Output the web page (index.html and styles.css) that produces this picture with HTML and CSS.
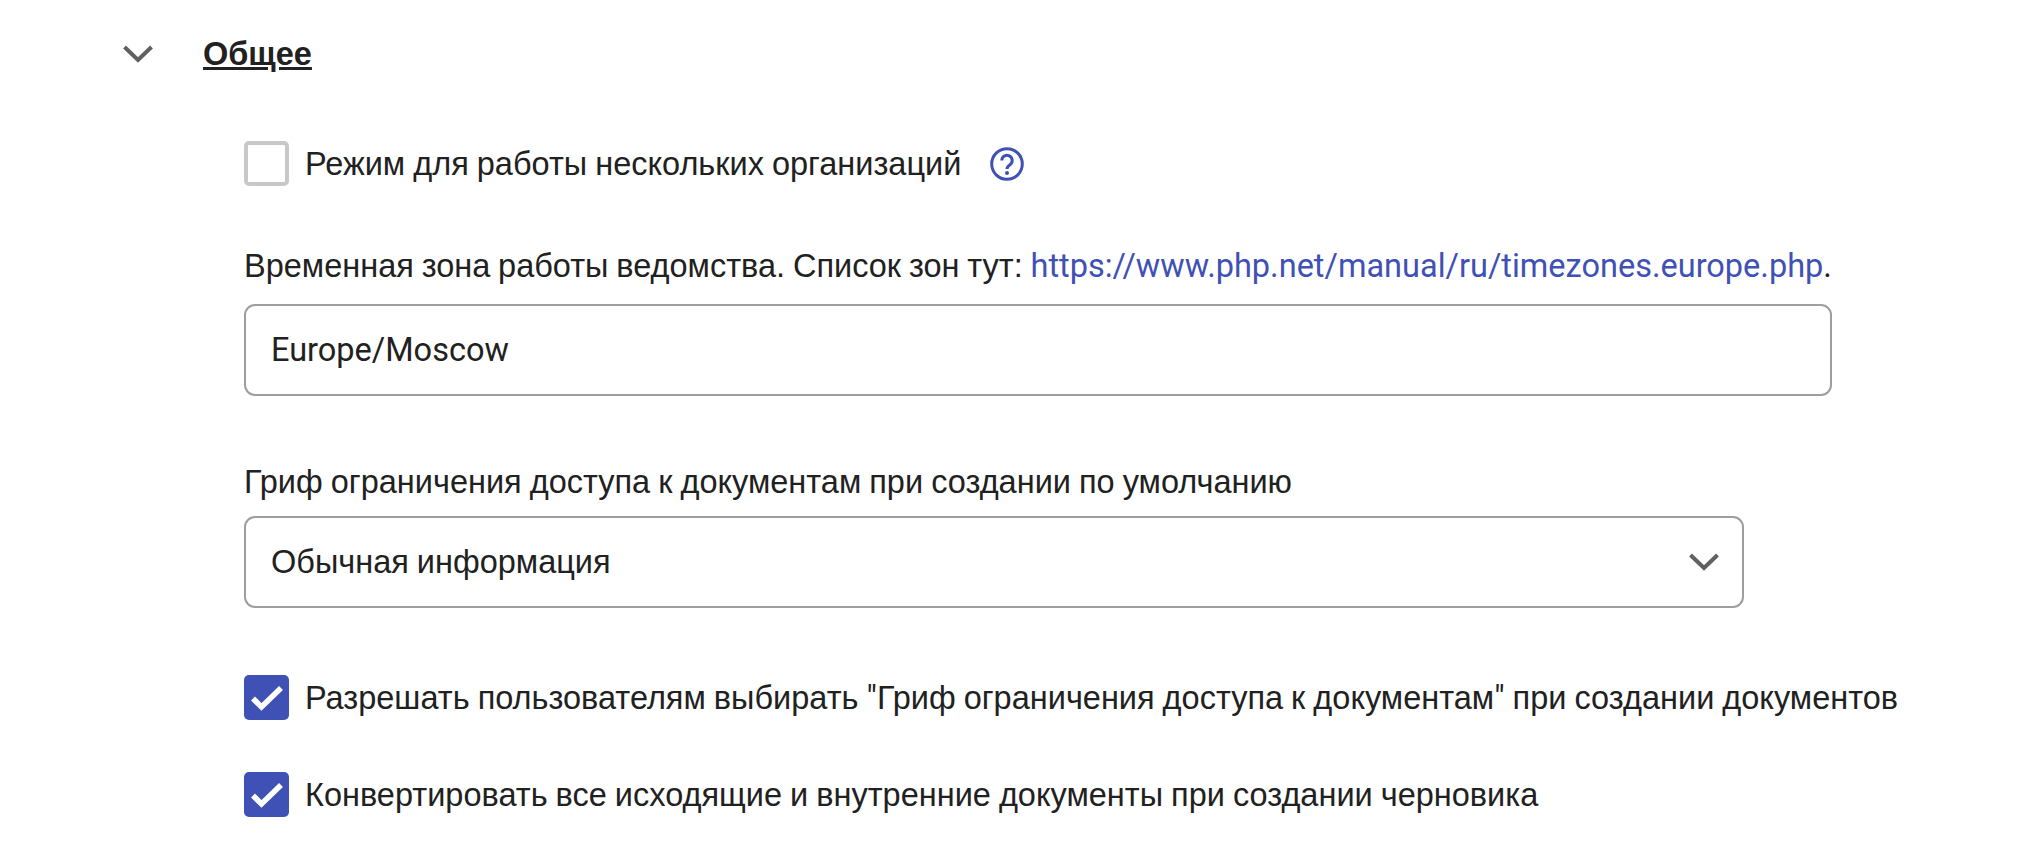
FILE: index.html
```html
<!DOCTYPE html>
<html lang="ru">
<head>
<meta charset="utf-8">
<title>Общее</title>
<link rel="stylesheet" href="styles.css">
</head>
<body>
<main class="section">
  <header class="section-head">
    <svg class="chev chev-head" viewBox="0 0 32 20"><path d="M2.500 3 L16 16 L29.500 3"/></svg>
    <h2 class="section-title">Общее</h2>
  </header>
  <div class="section-body">
    <div class="check-row first">
      <span class="box box-off"></span>
      <span class="check-label">Режим для работы нескольких организаций</span>
      <svg class="help" viewBox="0 0 34 34"><circle cx="17" cy="17" r="15.300"/><path class="help-q" d="M11.800 13.500a5.200 5.200 0 1 1 8.200 4.200c-2 1.400-3 2.300-3 4.300"/><circle class="help-dot" cx="17" cy="26" r="2"/></svg>
    </div>
    <div class="field field-tz">
      <div class="field-label">Временная зона работы ведомства. Список зон тут: <a class="link latin" href="#">https://www.php.net/manual/ru/timezones.europe.php</a><span class="latin">.</span></div>
      <div class="control control-wide latin">Europe/Moscow</div>
    </div>
    <div class="field field-grif">
      <div class="field-label">Гриф ограничения доступа к документам при создании по умолчанию</div>
      <div class="control control-select"><span>Обычная информация</span><svg class="chev chev-select" viewBox="0 0 32 20"><path d="M2.500 3 L16 16 L29.500 3"/></svg></div>
    </div>
    <div class="check-row second">
      <span class="box box-on"><svg viewBox="0 0 45 45"><path d="M9 23.500 L17.500 32 L37 13"/></svg></span>
      <span class="check-label">Разрешать пользователям выбирать <span class="latin">"</span>Гриф ограничения доступа к документам<span class="latin">"</span> при создании документов</span>
    </div>
    <div class="check-row third">
      <span class="box box-on"><svg viewBox="0 0 45 45"><path d="M9 23.500 L17.500 32 L37 13"/></svg></span>
      <span class="check-label">Конвертировать все исходящие и внутренние документы при создании черновика</span>
    </div>
  </div>
</main>
</body>
</html>
```
FILE: styles.css
```css
* { box-sizing: border-box; }
html, body { margin: 0; height: 100%; background: #fff; overflow: hidden; }
body { font-family: "Liberation Sans", Arial, sans-serif; font-size: 32.5px; word-spacing: -1px; color: #212121; line-height: 36px; }
.latin { font-family: Roboto, "Liberation Sans", sans-serif; }
.section { padding: 36px 0 0 120px; }
.section-head { display: flex; align-items: center; height: 36px; }
.section-title { margin: 0 0 0 49px; font-size: 32.5px; font-weight: 700; text-decoration: underline; line-height: 36px; }
.chev { fill: none; stroke: #616161; stroke-width: 4; }
.chev-head { width: 32px; height: 20px; margin-left: 2px; }
.section-body { padding-left: 124px; }
.check-row { display: flex; align-items: center; height: 45px; }
.first { margin-top: 69px; }
.second { margin-top: 67px; }
.third { margin-top: 52px; }
.box { flex: none; width: 45px; height: 45px; border-radius: 5px; margin-right: 16px; }
.box-off { border: 4px solid #c8c8c8; }
.box-on { background: #3f51b5; }
.box-on svg { display: block; width: 45px; height: 45px; fill: none; stroke: #fff; stroke-width: 5.500; }
.help { width: 34px; height: 34px; margin-left: 29px; fill: none; stroke: #3f51b5; stroke-width: 3; }
.help-dot { fill: #3f51b5; stroke: none; }
.field-tz { margin-top: 62px; }
.field-grif { margin-top: 68px; }
.field-label { height: 36px; margin-bottom: 16px; }
.field-tz .field-label { margin-bottom: 20px; word-spacing: -1.200px; }
.link { color: #3f51b5; text-decoration: none; }
.control { height: 92px; border: 2px solid #9e9e9e; border-radius: 11px; padding: 0 25px; display: flex; align-items: center; justify-content: space-between; }
.control-wide { width: 1588px; }
.control-select { width: 1500px; padding-right: 22px; }
.chev-select { width: 32px; height: 20px; }
```
